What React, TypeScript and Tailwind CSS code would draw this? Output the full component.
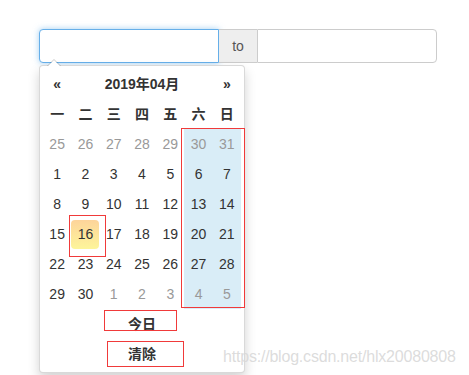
const weeks: { d: number; muted: boolean }[][] = [
  [25, 26, 27, 28, 29, 30, 31].map((d) => ({ d, muted: true })),
  [1, 2, 3, 4, 5, 6, 7].map((d) => ({ d, muted: false })),
  [8, 9, 10, 11, 12, 13, 14].map((d) => ({ d, muted: false })),
  [15, 16, 17, 18, 19, 20, 21].map((d) => ({ d, muted: false })),
  [22, 23, 24, 25, 26, 27, 28].map((d) => ({ d, muted: false })),
  [29, 30, 1, 2, 3, 4, 5].map((d, i) => ({ d, muted: i > 1 })),
];

const weekdays = ["一", "二", "三", "四", "五", "六", "日"];

export default function App() {
  return (
    <div
      className="relative w-[469px] h-[375px] overflow-hidden bg-white text-[14px] text-[#333]"
      style={{ fontFamily: '"Liberation Sans", "Noto Sans CJK SC", sans-serif' }}
    >
      <div className="pl-[39px] pt-[29px]">
        {/* range inputs */}
        <div className="flex h-[34px]">
          <div className="w-[180px] rounded-l-[4px] border border-[#66afe9] shadow-[0_0_6px_rgba(102,175,233,0.6)] bg-white" />
          <div className="w-[38px] flex items-center justify-center bg-[#eee] border-y border-[#ccc] text-[#555]">
            to
          </div>
          <div className="w-[180px] rounded-r-[4px] border border-[#ccc] bg-white" />
        </div>

        {/* dropdown */}
        <div className="relative mt-[2px] w-[206px] rounded-[4px] border border-black/15 bg-white p-[3px] shadow-[0_6px_12px_rgba(0,0,0,0.175)]">
          <div className="absolute -top-[7px] left-[7px] w-0 h-0 border-x-[7px] border-x-transparent border-b-[7px] border-b-black/20" />
          <div className="absolute -top-[6px] left-[8px] w-0 h-0 border-x-[6px] border-x-transparent border-b-[6px] border-b-white" />

          <div className="grid grid-cols-7 w-[198px]">
            <div className="h-[30px] flex items-center justify-center font-bold">«</div>
            <div className="col-span-5 h-[30px] flex items-center justify-center font-bold">2019年04月</div>
            <div className="h-[30px] flex items-center justify-center font-bold">»</div>

            {weekdays.map((w) => (
              <div key={w} className="h-[30px] flex items-center justify-center font-bold">
                {w}
              </div>
            ))}

            {weeks.map((row, ri) =>
              row.map((c, ci) => {
                const weekend = ci >= 5;
                const today = ri === 3 && ci === 1;
                return (
                  <div
                    key={ri + "-" + ci}
                    className={`h-[30px] flex items-center justify-center ${weekend ? "bg-[#d9edf7]" : ""} ${
                      c.muted ? "text-[#999]" : "text-[#333]"
                    }`}
                  >
                    {today ? (
                      <div className="w-[28px] h-[29px] rounded-[4px] bg-gradient-to-b from-[#fdd49a] to-[#fdf59a] flex items-center justify-center">
                        {c.d}
                      </div>
                    ) : (
                      c.d
                    )}
                  </div>
                );
              })
            )}

            <div className="col-span-7 h-[30px] flex items-center justify-center font-bold">今日</div>
            <div className="col-span-7 h-[30px] flex items-center justify-center font-bold">清除</div>
          </div>
        </div>
      </div>

      {/* red annotation boxes */}
      <div className="absolute left-[181px] top-[128px] w-[64px] h-[180px] border border-[#f03a3a]" />
      <div className="absolute left-[69px] top-[215px] w-[37px] h-[42px] border border-[#f03a3a]" />
      <div className="absolute left-[104px] top-[310px] w-[73px] h-[21px] border border-[#f03a3a]" />
      <div className="absolute left-[107px] top-[341px] w-[77px] h-[26px] border border-[#f03a3a]" />

      {/* watermark */}
      <div className="absolute left-[223px] top-[345px] text-[16px] text-[#d8d8d8]/90 tracking-[-0.2px]">
        https://blog.csdn.net/hlx20080808
      </div>
    </div>
  );
}
